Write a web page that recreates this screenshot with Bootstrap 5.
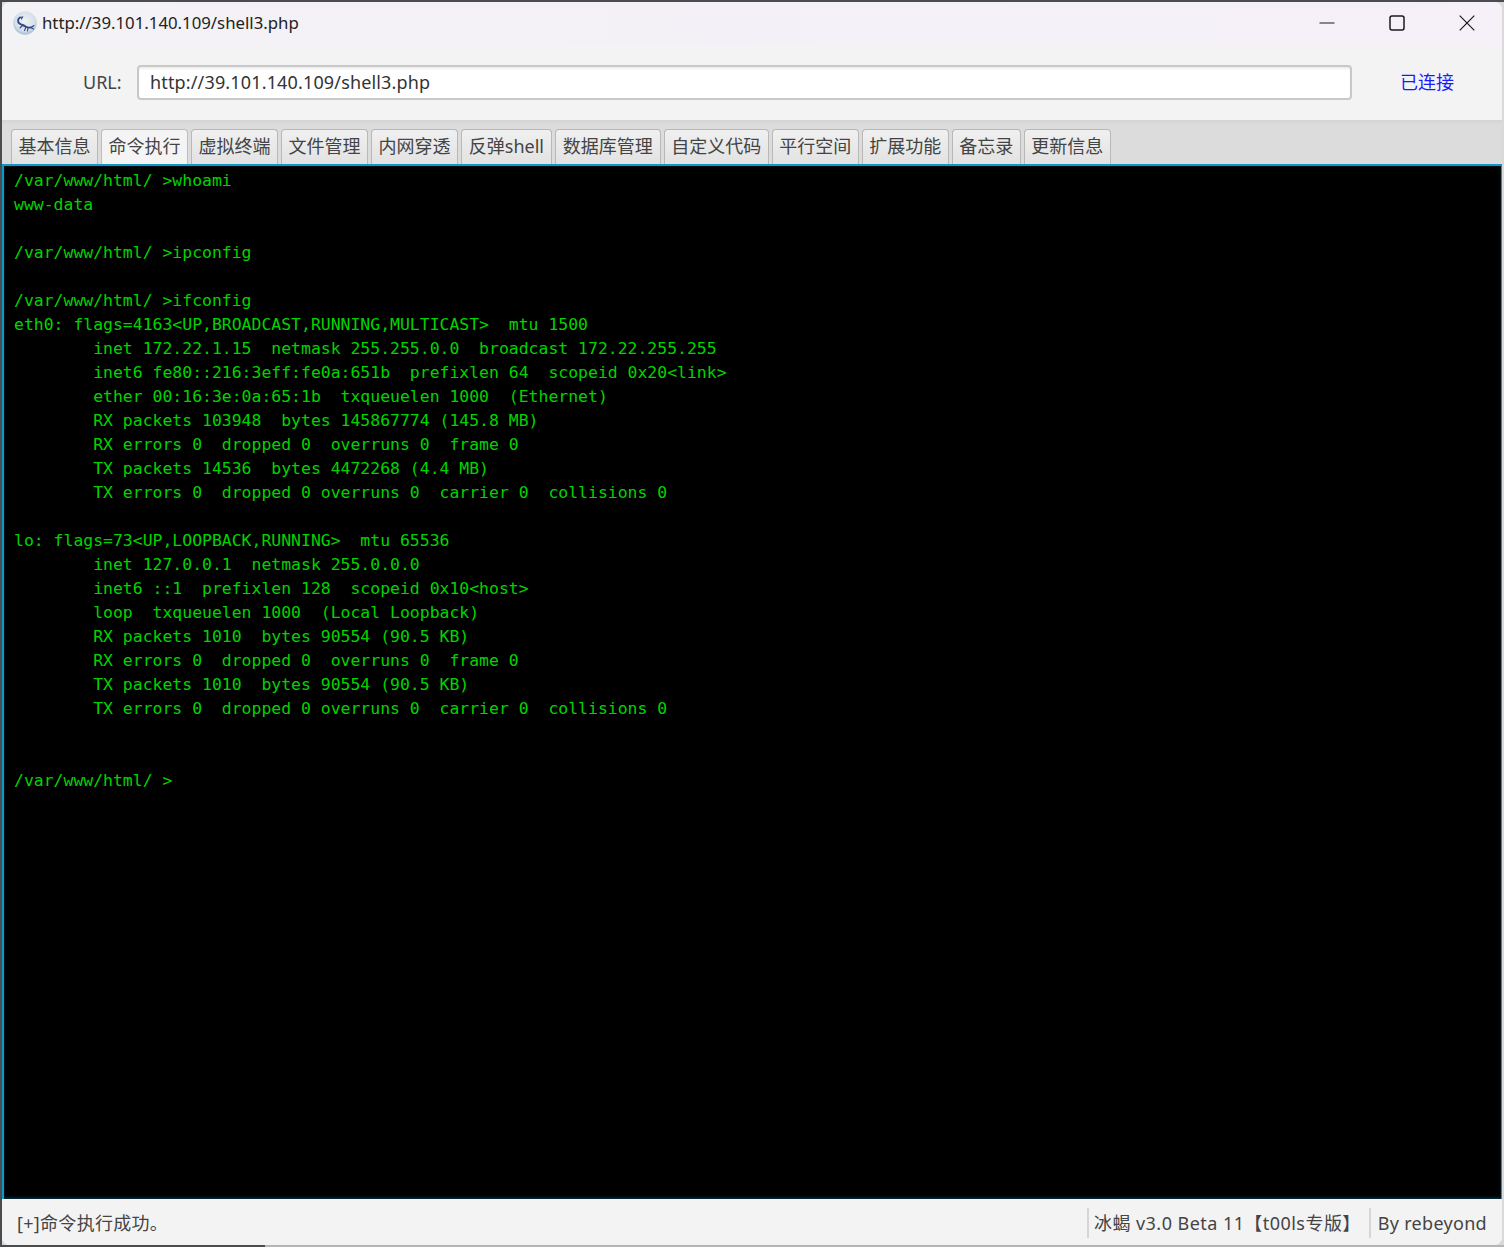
<!DOCTYPE html>
<html lang="zh">
<head>
<meta charset="utf-8">
<title>shell3</title>
<link href="https://cdn.jsdelivr.net/npm/bootstrap@5.3.0/dist/css/bootstrap.min.css" rel="stylesheet">
<style>
html,body{height:100%;margin:0;overflow:hidden}
body{font-family:"Noto Sans","Noto Sans CJK SC",sans-serif;font-size:18px;color:#333;
 background:
  linear-gradient(#4a4d50,#4a4d50) top/100% 2px no-repeat,
  linear-gradient(#4a4d50,#4a4d50) left/2px 100% no-repeat,
  linear-gradient(90deg,#4a4d50 265px,#b5b5b5 265px) bottom/100% 2px no-repeat,
  #d9d9d9;}
.app-win{position:absolute;left:2px;top:2px;width:1500px;height:1243px;border-radius:8px;overflow:hidden;background:#f3f3f3;display:flex;flex-direction:column}
.title-strip{height:43px;flex:none;background:linear-gradient(90deg,#f3f2f5,#f3f1f7 50%,#f6f0f8);padding:0 0 2px 11px}
.title-text{font-size:16.8px;color:#222;margin-left:5px;white-space:nowrap}
.win-ctl{width:70px;height:41px}
.url-strip{height:75px;flex:none;background:#f3f3f3;padding-left:81px;padding-right:48px}
.url-label{font-size:18px;color:#444;width:54px}
.url-box{flex:1 1 auto;height:35px;border:2px solid #c8c8c8;border-radius:4px;background:#fff;padding:0 11px 1px;font-size:18px;line-height:30px;color:#333;box-shadow:inset 0 2px 2px #eee;width:auto;min-height:0;letter-spacing:.15px;margin-right:48px}
.url-box:focus{box-shadow:inset 0 2px 2px #eee;border-color:#c8c8c8}
.conn-state{color:#1a1aff;font-size:18px;white-space:nowrap}
.tabs-strip{height:44px;flex:none;background:linear-gradient(#d4d4d4,#dcdcdc 5px);padding:9px 0 0 9px;border-bottom:0;gap:3px;flex-wrap:nowrap}
.tabs-strip .nav-link{height:35px;padding:0 6.5px;font-size:18px;line-height:33px;color:#444;background:linear-gradient(#f0f0f0,#e2e2e2);border:1px solid #b8b8b8;border-bottom:0;border-radius:4px 4px 0 0;margin:0;white-space:nowrap}
.tabs-strip .nav-link.active{background:#f4f4f4;color:#444;border-color:#bdbdbd}
.tabs-strip .nav-link.tab-wide{padding:0 6.8px}
.tabs-strip .nav-link.tab-mid{padding:0 7px}
.term-pane{flex:1 1 auto;background:#000;border:solid #0f97c8;border-width:2px 1px 0 2px;min-height:0;overflow:hidden;box-shadow:inset 0 0 2px #06344a,inset 0 -2px 2px #03202c}
.term-out{margin:0;padding:3px 0 0 10px;font-family:"DejaVu Sans Mono","Liberation Mono",monospace;font-size:16.45px;line-height:24px;color:#00d400;overflow:hidden}
.status-strip{height:46px;flex:none;background:#f3f3f3;font-size:18px;color:#444;padding:2px 15px 0 15px}
.status-cell{height:30px;line-height:30px;white-space:nowrap;letter-spacing:.3px}
.status-cell.cell-ver{letter-spacing:.45px}
.status-sep{width:2px;height:30px;background:#d6d6d6;margin:0 5px 0 0}
.status-sep.sep-end{margin:0 7px 0 8px}
</style>
</head>
<body>
<div class="app-win">
  <div class="title-strip d-flex align-items-center">
    <svg width="24" height="24" viewBox="0 0 24 24" aria-hidden="true"><defs><radialGradient id="g" cx=".5" cy=".42" r=".6"><stop offset="0" stop-color="#eef3f5"/><stop offset=".7" stop-color="#d5e0e9"/><stop offset="1" stop-color="#9fb6d2"/></radialGradient></defs><circle cx="12" cy="12" r="11.7" fill="url(#g)"/><path d="M7 6.500c-2.500 1.500-2.500 4.500-.5 6 2 1.500 4 1.500 6 3 1.500 1 3 1.500 5.500 1" fill="none" stroke="#34488a" stroke-width="1.900" stroke-linecap="round"/><path d="M7 6.500l2.500-.5-1 2M18 16.500l3-2M18 16.500l2.500 1.500M13 16l-1.500 3.500M15 17l-.5 3M10 14l-3 3" fill="none" stroke="#34488a" stroke-width="1.100" stroke-linecap="round"/></svg>
    <span class="title-text">http://39.101.140.109/shell3.php</span>
    <div class="ms-auto d-flex">
      <div class="win-ctl d-flex align-items-center justify-content-center"><svg width="16" height="16" viewBox="0 0 16 16"><path d="M.5 8h15" stroke="#1a1a1a" stroke-width="1.100"/></svg></div>
      <div class="win-ctl d-flex align-items-center justify-content-center"><svg width="16" height="16" viewBox="0 0 16 16"><rect x="1" y="1" width="14" height="14" rx="2" fill="none" stroke="#1a1a1a" stroke-width="1.500"/></svg></div>
      <div class="win-ctl d-flex align-items-center justify-content-center"><svg width="16" height="16" viewBox="0 0 16 16"><path d="M.7.700l14.600 14.600M15.300.700.700 15.300" stroke="#1a1a1a" stroke-width="1.200"/></svg></div>
    </div>
  </div>
  <div class="url-strip d-flex align-items-center">
    <span class="url-label">URL:</span>
    <input class="form-control url-box" type="text" value="http://39.101.140.109/shell3.php" aria-label="URL">
    <span class="conn-state">已连接</span>
  </div>
  <ul class="nav nav-tabs tabs-strip">
    <li class="nav-item"><a class="nav-link" href="#">基本信息</a></li>
    <li class="nav-item"><a class="nav-link active" href="#">命令执行</a></li>
    <li class="nav-item"><a class="nav-link" href="#">虚拟终端</a></li>
    <li class="nav-item"><a class="nav-link" href="#">文件管理</a></li>
    <li class="nav-item"><a class="nav-link" href="#">内网穿透</a></li>
    <li class="nav-item"><a class="nav-link tab-wide" href="#">反弹shell</a></li>
    <li class="nav-item"><a class="nav-link tab-mid" href="#">数据库管理</a></li>
    <li class="nav-item"><a class="nav-link" href="#">自定义代码</a></li>
    <li class="nav-item"><a class="nav-link" href="#">平行空间</a></li>
    <li class="nav-item"><a class="nav-link" href="#">扩展功能</a></li>
    <li class="nav-item"><a class="nav-link" href="#">备忘录</a></li>
    <li class="nav-item"><a class="nav-link" href="#">更新信息</a></li>
  </ul>
  <div class="term-pane">
<pre class="term-out">/var/www/html/ &gt;whoami
www-data

/var/www/html/ &gt;ipconfig

/var/www/html/ &gt;ifconfig
eth0: flags=4163&lt;UP,BROADCAST,RUNNING,MULTICAST&gt;  mtu 1500
        inet 172.22.1.15  netmask 255.255.0.0  broadcast 172.22.255.255
        inet6 fe80::216:3eff:fe0a:651b  prefixlen 64  scopeid 0x20&lt;link&gt;
        ether 00:16:3e:0a:65:1b  txqueuelen 1000  (Ethernet)
        RX packets 103948  bytes 145867774 (145.8 MB)
        RX errors 0  dropped 0  overruns 0  frame 0
        TX packets 14536  bytes 4472268 (4.4 MB)
        TX errors 0  dropped 0 overruns 0  carrier 0  collisions 0

lo: flags=73&lt;UP,LOOPBACK,RUNNING&gt;  mtu 65536
        inet 127.0.0.1  netmask 255.0.0.0
        inet6 ::1  prefixlen 128  scopeid 0x10&lt;host&gt;
        loop  txqueuelen 1000  (Local Loopback)
        RX packets 1010  bytes 90554 (90.5 KB)
        RX errors 0  dropped 0  overruns 0  frame 0
        TX packets 1010  bytes 90554 (90.5 KB)
        TX errors 0  dropped 0 overruns 0  carrier 0  collisions 0


/var/www/html/ &gt;</pre>
  </div>
  <div class="status-strip d-flex align-items-center">
    <span class="status-cell">[+]命令执行成功。</span>
    <span class="status-sep ms-auto"></span>
    <span class="status-cell cell-ver">冰蝎 v3.0 Beta 11【t00ls专版】</span>
    <span class="status-sep sep-end"></span>
    <span class="status-cell">By rebeyond</span>
  </div>
</div>
<script src="https://cdn.jsdelivr.net/npm/bootstrap@5.3.0/dist/js/bootstrap.bundle.min.js"></script>
</body>
</html>
